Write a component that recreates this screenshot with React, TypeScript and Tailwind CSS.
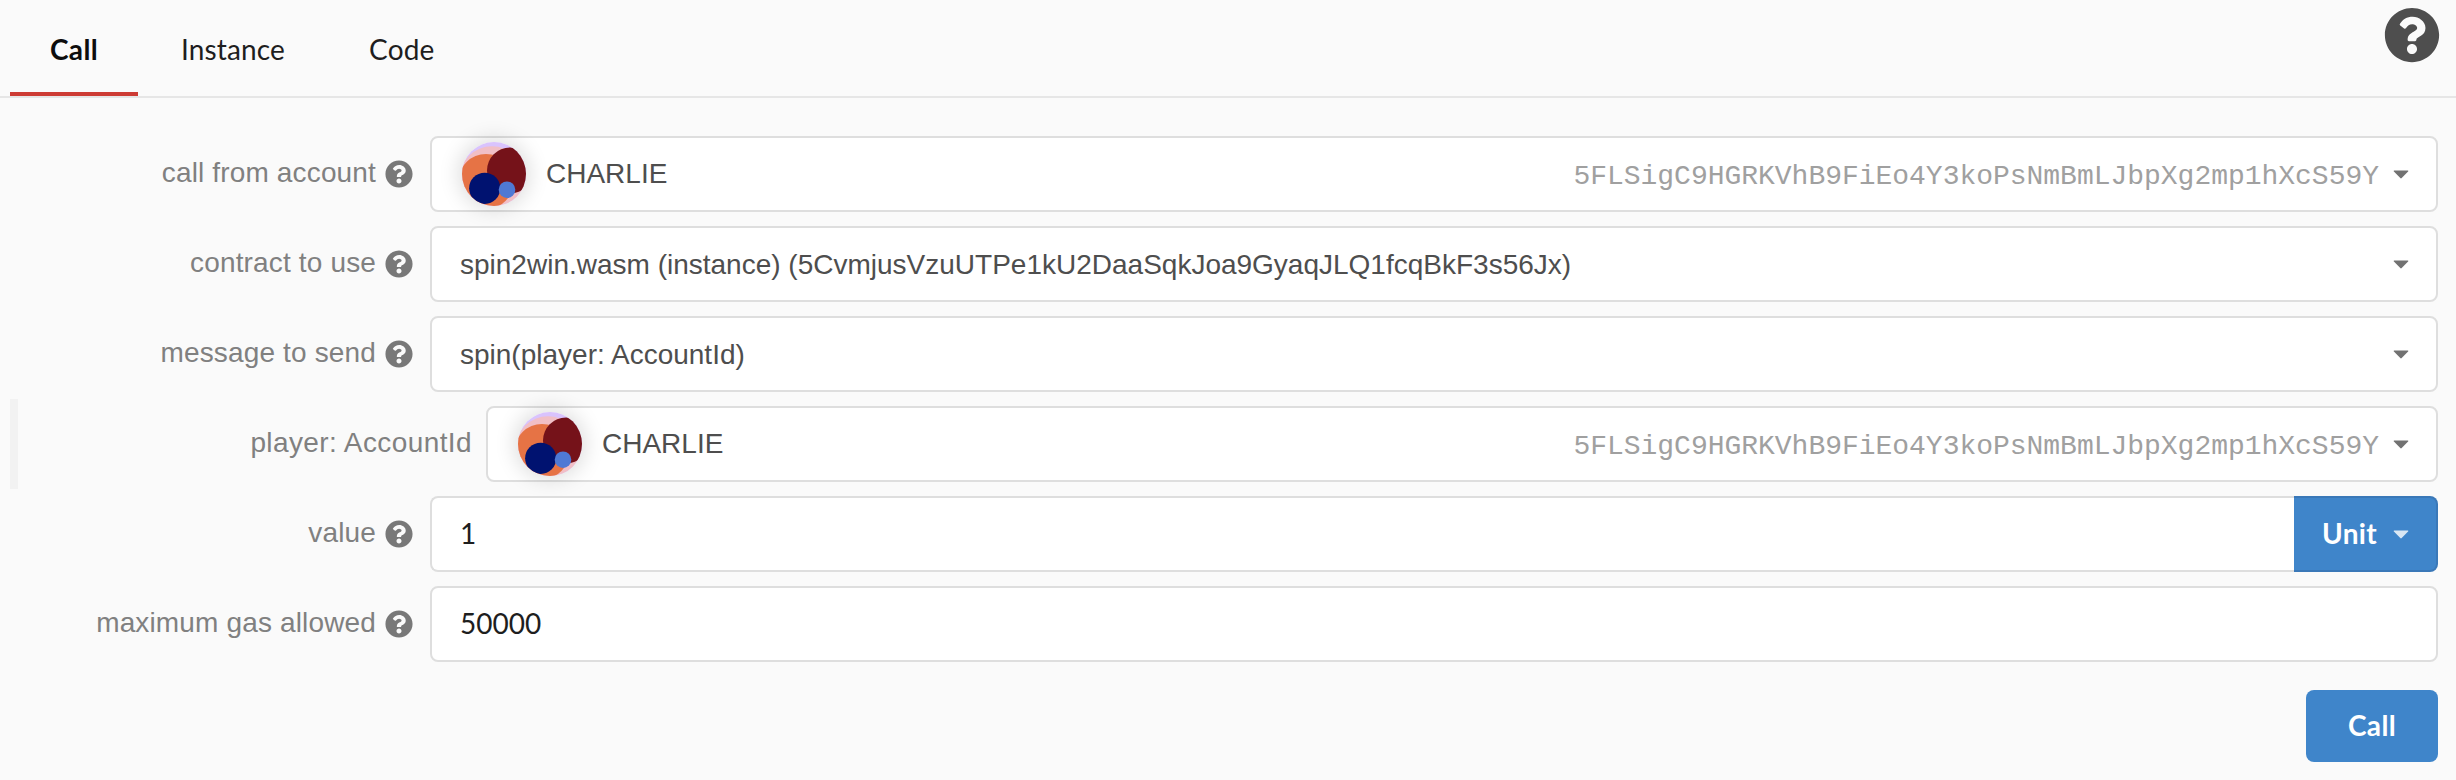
import type { ReactNode } from "react";
import { FaQuestionCircle } from "react-icons/fa";

const ADDRESS = "5FLSigC9HGRKVhB9FiEo4Y3koPsNmBmLJbpXg2mp1hXcS59Y";

function Caret({ className }: { className: string }) {
  return (
    <svg viewBox="0 0 16 9" className={`h-[9px] w-4 shrink-0 ${className}`} fill="currentColor">
      <path d="M1.4 0.4h13.2c.7 0 1 .7.5 1.2L8.7 8.100c-.4.4-1 .4-1.400 0L.9 1.600C.4 1.100.7.4 1.400.4z" />
    </svg>
  );
}

function Avatar() {
  return (
    <span className="size-16 shrink-0 rounded-full shadow-[0_0_20px_4px_rgba(0,0,0,0.13)]">
      <svg viewBox="0 0 64 64" className="size-16 rounded-full">
        <rect width="64" height="64" fill="#d9c3fd" />
        <circle cx="30" cy="36.800" r="32.500" fill="#f1bfc6" />
        <circle cx="24" cy="39.500" r="27.500" fill="#e67345" />
        <circle cx="48" cy="28.500" r="23" fill="#751219" />
        <circle cx="22.700" cy="46.300" r="15.600" fill="#001270" />
        <circle cx="45" cy="47.700" r="8.300" fill="#4f79d4" />
      </svg>
    </span>
  );
}

function Row({ label, help = true, children }: { label: string; help?: boolean; children: ReactNode }) {
  return (
    <div className="flex h-[76px]">
      <label
        className={`flex shrink-0 items-start justify-end pt-5 text-[28px] leading-8 text-[#808080] ${
          help ? "w-[430px] pr-[17px] tracking-[0.15px]" : "w-[468px] pr-[14px] tracking-[0.4px]"
        }`}
      >
        <span className="pt-px whitespace-pre">{label}</span>
        {help && <FaQuestionCircle className="mt-[3.5px] ml-[9px] size-7 text-[#787878]" />}
      </label>
      {children}
    </div>
  );
}

const box = "flex min-w-0 flex-1 items-center border-2 border-[#dedede] bg-white text-[28px] leading-8";

function Select({ children }: { children: ReactNode }) {
  return (
    <div className={`${box} rounded-lg pr-[27px] text-[#4e4e4e]`}>
      {children}
      <Caret className="ml-auto text-[#727272]" />
    </div>
  );
}

function AccountSelect() {
  return (
    <Select>
      <span className="ml-[30px] flex">
        <Avatar />
      </span>
      <span className="ml-5 flex-1">CHARLIE</span>
      <span className="mr-[14px] pt-[5px] font-['Liberation_Mono',monospace] text-[28px] leading-8 tracking-[-0.02px] text-[#a0a0a0]">
        {ADDRESS}
      </span>
    </Select>
  );
}

export default function App() {
  return (
    <div className="h-[780px] w-[2456px] bg-[#fafafa] font-['Liberation_Sans',sans-serif]">
      <nav className="flex h-[98px] items-stretch border-b-2 border-[#e6e6e6] pl-[10px] font-['Lato',sans-serif] text-[28px] leading-8 text-[#1e1e1e]">
        <a className="w-32 border-b-4 border-[#cd3b34] pt-[33px] text-center font-bold tracking-[0.4px] text-[#0d0d0d]">
          Call
        </a>
        <a className="ml-[43px] pt-[33px] tracking-[0.15px]">Instance</a>
        <a className="ml-[84px] pt-[33px] tracking-[0.15px]">Code</a>
        <FaQuestionCircle className="mt-[7px] mr-4 ml-auto size-14 text-[#4e4e4e]" />
      </nav>

      <main className="flex flex-col gap-[14px] pt-[38px] pr-[18px]">
        <Row label="call from account">
          <AccountSelect />
        </Row>
        <Row label="contract to use">
          <Select>
            <span className="ml-7 pt-px">spin2win.wasm (instance) (5CvmjusVzuUTPe1kU2DaaSqkJoa9GyaqJLQ1fcqBkF3s56Jx)</span>
          </Select>
        </Row>
        <Row label="message to send">
          <Select>
            <span className="ml-7 pt-px">spin(player: AccountId)</span>
          </Select>
        </Row>
        <div className="-my-[7px] ml-[10px] border-l-8 border-[#f2f2f2] py-[7px]">
          <Row label="player: AccountId" help={false}>
            <AccountSelect />
          </Row>
        </div>
        <Row label="value">
          <div className={`${box} rounded-l-lg border-r-0 pb-0.5 font-['Lato',sans-serif] text-[#1e1e1e]`}>
            <span className="ml-7">1</span>
          </div>
          <div className="flex w-36 items-center rounded-r-lg border-2 border-l-0 border-[#3a78b8] bg-[#3f85ca] font-['Lato',sans-serif] text-[28px] leading-8 font-bold text-white">
            <span className="ml-7 pb-0.5 tracking-[0.3px]">Unit</span>
            <Caret className="mr-[27px] ml-auto text-[#d9e7f4]" />
          </div>
        </Row>
        <Row label="maximum gas allowed">
          <div className={`${box} rounded-lg pb-0.5 font-['Lato',sans-serif] text-[#1e1e1e]`}>
            <span className="ml-7">50000</span>
          </div>
        </Row>
        <button className="mt-[14px] h-[72px] w-[132px] self-end rounded-lg bg-[#3f85ca] pb-0.5 font-['Lato',sans-serif] text-[28px] leading-8 font-bold tracking-[0.4px] text-white">
          Call
        </button>
      </main>
    </div>
  );
}
